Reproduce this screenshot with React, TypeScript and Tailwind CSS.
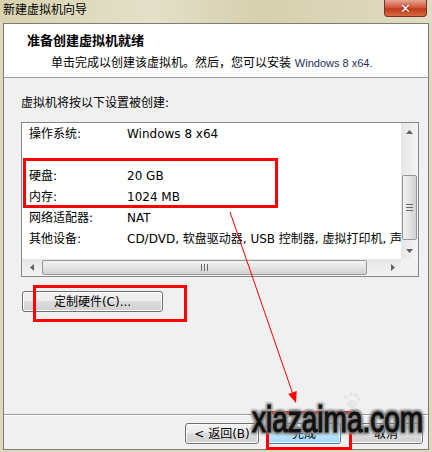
import React from "react";

const rows = [
  { label: "操作系统:", value: "Windows 8 x64" },
  { label: "", value: "" },
  { label: "硬盘:", value: "20 GB" },
  { label: "内存:", value: "1024 MB" },
  { label: "网络适配器:", value: "NAT" },
  { label: "其他设备:", value: "CD/DVD, 软盘驱动器, USB 控制器, 虚拟打印机, 声卡" },
];

const font = "[font-family:'DejaVu_Sans','Noto_Sans_CJK_SC',sans-serif]";

const Win7Button: React.FC<{ children: React.ReactNode; className?: string; focused?: boolean }> = ({
  children,
  className = "",
  focused,
}) => (
  <div
    className={`flex items-center justify-center rounded-[3px] border text-[12px] text-black ${
      focused
        ? "border-[#3c7fb1] bg-[linear-gradient(#eaf6fd_0%,#d9f0fc_45%,#bee6fd_50%,#a7d9f5_100%)]"
        : "border-[#707070] bg-[linear-gradient(#f2f2f2_0%,#ebebeb_45%,#dddddd_50%,#cfcfcf_100%)]"
    } shadow-[inset_0_0_0_1px_#fcfcfc] ${className}`}
  >
    {children}
  </div>
);

const App: React.FC = () => {
  return (
    <div className={`relative h-[452px] w-[432px] overflow-hidden bg-[#ddd8bd] ${font}`}>
      {/* title bar */}
      <div className="flex h-[23px] items-start justify-between bg-[linear-gradient(90deg,#d8d2b0_0%,#e4e0c9_35%,#d6d0ae_60%,#e0dbc2_100%)]">
        <span className="pl-[3px] pt-[2px] text-[12px] leading-[16px] text-black">新建虚拟机向导</span>
        <div className="mr-[5px] flex h-[17px] w-[43px] items-center justify-center rounded-b-[4px] border border-t-0 border-[#7a3226] bg-[linear-gradient(#e8a493_0%,#d25a3e_45%,#c13a1c_55%,#d66a45_100%)]">
          <span className="text-[13px] font-bold leading-none text-white [text-shadow:0_0_2px_#5a1a10]">✕</span>
        </div>
      </div>

      {/* client area */}
      <div className="ml-[3px] flex h-[427px] w-[426px] flex-col border border-[#7e7e74] bg-[#f0f0f0]">
        {/* header */}
        <div className="h-[54px] border-b border-[#a0a0a0] bg-white">
          <div className="pl-[23px] pt-[9px] text-[13px] font-bold leading-[16px] text-black">准备创建虚拟机就绪</div>
          <div className="pl-[47px] pt-[6px] text-[12px] leading-[16px] text-black">
            单击完成以创建该虚拟机。然后，您可以安装{" "}
            <span className="[font-family:'Liberation_Sans',sans-serif] text-[11px] text-[#1c2f5a]">Windows 8 x64.</span>
          </div>
        </div>

        {/* body */}
        <div className="flex flex-1 flex-col">
          <div className="pl-[17px] pt-[17px] text-[12px] leading-[16px] text-black">虚拟机将按以下设置被创建:</div>

          {/* list box */}
          <div className="ml-[17px] mt-[11px] flex h-[155px] w-[398px] flex-col border border-[#828790] bg-white">
            <div className="flex min-h-0 flex-1">
              <div className="flex-1 overflow-hidden">
                {rows.map((r, i) => (
                  <div key={i} className="flex h-[21px] items-center whitespace-nowrap text-[12px] text-black">
                    <span className="w-[105px] shrink-0 pl-[7px]">{r.label}</span>
                    <span>{r.value}</span>
                  </div>
                ))}
              </div>
              {/* vertical scrollbar */}
              <div className="flex w-[17px] flex-col items-center bg-[linear-gradient(90deg,#e6e6e6,#f4f4f4)]">
                <div className="flex h-[17px] w-full items-center justify-center">
                  <svg width="7" height="4" viewBox="0 0 7 4"><polygon points="0,4 3.5,0 7,4" fill="#606060" /></svg>
                </div>
                <div className="mt-[35px] flex h-[65px] w-[15px] flex-col items-center justify-center gap-[2px] rounded-[2px] border border-[#979797] bg-[linear-gradient(90deg,#f3f3f3,#e3e3e3_50%,#d2d2d2)]">
                  <div className="h-px w-[7px] bg-[#6a6a6a]" />
                  <div className="h-px w-[7px] bg-[#6a6a6a]" />
                  <div className="h-px w-[7px] bg-[#6a6a6a]" />
                </div>
                <div className="mt-auto flex h-[17px] w-full items-center justify-center">
                  <svg width="7" height="4" viewBox="0 0 7 4"><polygon points="0,0 3.5,4 7,0" fill="#606060" /></svg>
                </div>
              </div>
            </div>
            {/* horizontal scrollbar */}
            <div className="flex h-[17px]">
              <div className="flex flex-1 items-center bg-[linear-gradient(#e6e6e6,#f4f4f4)]">
                <div className="flex w-[20px] items-center justify-center">
                  <svg width="4" height="7" viewBox="0 0 4 7"><polygon points="4,0 0,3.5 4,7" fill="#606060" /></svg>
                </div>
                <div className="flex h-[15px] w-[325px] items-center justify-center gap-[2px] rounded-[2px] border border-[#979797] bg-[linear-gradient(#f3f3f3,#e3e3e3_50%,#d2d2d2)]">
                  <div className="h-[7px] w-px bg-[#6a6a6a]" />
                  <div className="h-[7px] w-px bg-[#6a6a6a]" />
                  <div className="h-[7px] w-px bg-[#6a6a6a]" />
                </div>
                <div className="ml-auto flex w-[17px] items-center justify-center">
                  <svg width="4" height="7" viewBox="0 0 4 7"><polygon points="0,0 4,3.5 0,7" fill="#606060" /></svg>
                </div>
              </div>
              <div className="w-[17px] bg-[#f0f0f0]" />
            </div>
          </div>

          <Win7Button className="ml-[18px] mt-[14px] h-[21px] w-[141px]">定制硬件(C)...</Win7Button>

          <div className="flex-1" />

          {/* footer */}
          <div className="border-t border-[#a0a0a0] shadow-[inset_0_1px_0_#ffffff]">
            <div className="flex justify-end gap-[8px] pb-[5px] pr-[5px] pt-[8px]">
              <Win7Button className="h-[21px] w-[74px]">&lt; 返回(B)</Win7Button>
              <Win7Button focused className="h-[21px] w-[74px]">完成</Win7Button>
              <Win7Button className="h-[21px] w-[74px]">取消</Win7Button>
            </div>
          </div>
        </div>
      </div>

      {/* annotation overlays */}
      <div className="absolute left-[23px] top-[158px] h-[50px] w-[255px] border-[3px] border-[#ff0000]" />
      <div className="absolute left-[33px] top-[285px] h-[37px] w-[154px] border-[3px] border-[#ff0000]" />
      <div className="absolute left-[266px] top-[411px] h-[39px] w-[86px] border-[3px] border-[#ff0000]" />
      <svg className="pointer-events-none absolute left-0 top-0" width="432" height="452" viewBox="0 0 432 452">
        <line x1="230" y1="212" x2="292.5" y2="393" stroke="#ff0000" strokeWidth="1" />
        <polygon points="296,403 296.7,391.1 288.2,394.1" fill="#ff0000" />
        {/* paw mark */}
        <g fill="#e4e4e4" opacity="0.9">
          <ellipse cx="352" cy="404" rx="5" ry="4" />
          <circle cx="346" cy="397" r="2" />
          <circle cx="351" cy="394" r="2" />
          <circle cx="356" cy="395" r="2" />
          <circle cx="359" cy="399" r="2" />
        </g>
      </svg>
      <div className="absolute left-[252px] top-[398px] origin-top scale-y-[1.35] [font-family:'Liberation_Sans',sans-serif] text-[28px] leading-[32px] text-[#111111] [-webkit-text-stroke:0.9px_#111111] [text-shadow:0_0_2px_#808080,0_0_3px_#808080,0_0_3px_#808080,0_0_4px_#8c8c8c,1.5px_1.5px_2px_#808080,-1.5px_-1.5px_2px_#808080,1.5px_-1.5px_2px_#808080,-1.5px_1.5px_2px_#808080]">
        xiazaima.com
      </div>
    </div>
  );
};

export default App;
